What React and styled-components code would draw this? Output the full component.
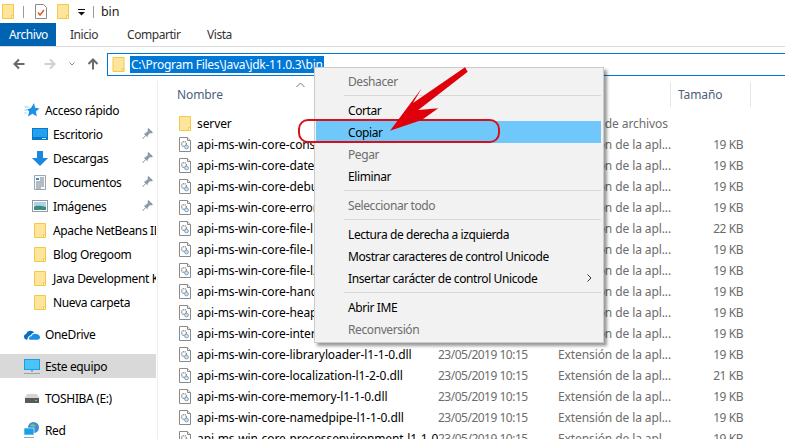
import React from "react";
import styled, { createGlobalStyle } from "styled-components";

const GlobalStyle = createGlobalStyle`
  html, body {
    margin: 0;
    padding: 0;
    background: #fff;
    overflow: hidden;
  }
`;

const Page = styled.div`
  position: relative;
  width: 785px;
  height: 439px;
  overflow: hidden;
  background: #fff;
  color: #000;
  font-family: "Noto Sans", "Open Sans", sans-serif;
  font-size: 12px;
  letter-spacing: -0.1px;
`;

const TitleBar = styled.div`
  height: 23px;
  display: flex;
  align-items: center;
  padding-left: 2px;
`;

const TitleSep = styled.span`
  width: 1px;
  height: 12px;
  background: #9a9a9a;
  margin: 0 ${(p) => p.$right}px 0 ${(p) => p.$left}px;
`;

const TitleText = styled.span`
  font-size: 12.5px;
  color: #222;
`;

const TitleGap = styled.span`
  width: 10px;
`;

const Tabs = styled.div`
  height: 23px;
  display: flex;
  border-bottom: 1px solid #dadada;
  letter-spacing: -0.45px;
`;

const Tab = styled.div`
  width: ${(p) => p.$w}px;
  display: flex;
  align-items: center;
  padding-left: ${(p) => p.$pad}px;
  box-sizing: border-box;
  background: ${(p) => (p.$active ? "#0063b1" : "transparent")};
  color: ${(p) => (p.$active ? "#fff" : "#333")};
`;

const NavBar = styled.div`
  height: 34px;
  display: flex;
  align-items: flex-start;
`;

const NavButtons = styled.div`
  width: 107px;
  height: 34px;
  display: flex;
  align-items: center;
  padding-left: 13px;
  box-sizing: border-box;
`;

const Address = styled.div`
  margin-top: 6px;
  flex: 1;
  height: 23px;
  box-sizing: border-box;
  border: 1px solid #0078d7;
  border-right: none;
  display: flex;
  align-items: center;
  padding-left: 4px;
  gap: 5px;
`;

const Selected = styled.span`
  background: #0078d7;
  color: #fff;
  line-height: 17px;
  padding: 0 1px;
  letter-spacing: -0.27px;
`;

const Body = styled.div`
  display: flex;
  height: 358px;
`;

const Sidebar = styled.div`
  width: 158px;
  box-sizing: border-box;
  border-right: 1px solid #eee;
  padding-top: 17px;
  flex: none;
  letter-spacing: -0.35px;
`;

const NavRow = styled.div`
  width: 156px;
  height: 24px;
  margin-bottom: ${(p) => p.$gap || 0}px;
  display: flex;
  align-items: center;
  box-sizing: border-box;
  position: relative;
  overflow: hidden;
  white-space: nowrap;
  background: ${(p) => (p.$selected ? "#d9d9d9" : "transparent")};
  padding-left: ${(p) => (p.$top ? 24 : 32)}px;
`;

const NavIcon = styled.span`
  width: 16px;
  margin-right: 5px;
  flex: none;
  display: flex;
  align-items: center;
  justify-content: center;
`;

const Pin = styled.span`
  position: absolute;
  right: 3px;
  top: 6px;
  display: flex;
`;

const Main = styled.div`
  flex: 1;
  min-width: 0;
`;

const HeaderRow = styled.div`
  height: 32px;
  box-sizing: border-box;
  padding-top: 1px;
  display: grid;
  grid-template-columns: 512px 81px;
  align-items: start;
  color: #4c607a;
  position: relative;
`;

const HeaderCell = styled.div`
  height: 25px;
  box-sizing: border-box;
  display: flex;
  align-items: center;
  padding-left: ${(p) => p.$pad}px;
  border-left: ${(p) => (p.$line ? "1px solid #e5e5e5" : "none")};
  border-right: ${(p) => (p.$line ? "1px solid #e5e5e5" : "none")};
`;

const SortMark = styled.svg`
  position: absolute;
  left: 138px;
  top: 1px;
`;

const FileList = styled.div`
  display: flex;
  flex-direction: column;
`;

const FileRow = styled.div`
  height: 21px;
  display: grid;
  grid-template-columns: 280px 120px 112px 73px;
  align-items: center;
  white-space: nowrap;
  color: #6d6d6d;
`;

const FileName = styled.div`
  display: flex;
  align-items: center;
  gap: 6px;
  padding-left: 21px;
  color: #000;
  overflow: hidden;
`;

const FileDate = styled.div`
  letter-spacing: -0.5px;
`;

const FileSize = styled.div`
  text-align: right;
  letter-spacing: -0.45px;
`;

const Menu = styled.div`
  position: absolute;
  left: 314px;
  top: 67px;
  width: 290px;
  height: 276px;
  box-sizing: border-box;
  padding: 2px 2px 2px 1px;
  background: #f2f2f2;
  border: 1px solid #ccc;
  box-shadow: 3px 3px 3px rgba(0, 0, 0, 0.4);
  letter-spacing: -0.4px;
`;

const MenuItem = styled.div`
  height: 22px;
  display: flex;
  align-items: center;
  justify-content: space-between;
  padding: 0 9px 0 32px;
  color: ${(p) => (p.$disabled ? "#6d6d6d" : "#000")};
  background: ${(p) => (p.$hot ? "#70c8fa" : "transparent")};
`;

const MenuSep = styled.div`
  height: 1px;
  margin: 3px 0 3px 28px;
  background: #d7d7d7;
`;

const Annotation = styled.svg`
  position: absolute;
  left: 0;
  top: 0;
  pointer-events: none;
`;

const Folder = ({ w = 12, h = 15 }) => (
  <svg width={w} height={h} viewBox="0 0 12 15" style={{ flex: "none" }}>
    <path d="M.5.5h11v14H.5z" fill="#fde59e" stroke="#f6c945" />
    <path d="M9.5 11.5h2v3h-2z" fill="#fff6d6" stroke="#f6c945" />
  </svg>
);

const DllIcon = () => (
  <svg width="12" height="15" viewBox="0 0 12 15" style={{ flex: "none" }}>
    <path d="M.5.5h8l3 3v11H.5z" fill="#fff" stroke="#8a8a8a" />
    <path d="M8.5.5v3h3" fill="#eee" stroke="#8a8a8a" />
    <circle cx="5" cy="7" r="2.4" fill="none" stroke="#8f8f8f" strokeWidth="1.4" strokeDasharray="1.2 .6" />
    <circle cx="7.5" cy="10" r="1.9" fill="#cfe3f2" stroke="#7aa6c8" />
  </svg>
);

const PinIcon = () => (
  <svg width="11" height="12" viewBox="0 0 11 12">
    <path d="M6.5 0 11 4.5 9.500 5.500 8 5 5.500 8 5.500 9.500 1.500 5.500 3 5.500 6 3 5.500 1.500Z" fill="#8d99a6" />
    <path d="M3.500 7.500 .5 11" stroke="#8d99a6" fill="none" />
  </svg>
);

const StarIcon = () => (
  <svg width="16" height="14" viewBox="0 0 15 14">
    <path d="M9.500 0 10.600 4.800 15 5.600 11.400 8.400 12.300 13.500 8 10.800 3.500 13.500 4.700 8.400 2.500 6.500 6.500 5Z" fill="#1e90e6" />
    <path d="M0 4h4M0 7h2.500M0 10h2" stroke="#8cc8f2" />
  </svg>
);

const DesktopIcon = () => (
  <svg width="16" height="12" viewBox="0 0 16 12">
    <rect width="16" height="12" fill="#0a78c8" />
    <rect x="1" y="1" width="14" height="8" fill="#22a2f0" />
    <path d="M10 10.500h4" stroke="#cfeaff" />
  </svg>
);

const DownloadIcon = () => (
  <svg width="16" height="15" viewBox="0 0 16 15">
    <path d="M5 0h6v7h5l-8 8-8-8h5Z" fill="#1b88e0" />
  </svg>
);

const DocsIcon = () => (
  <svg width="12" height="15" viewBox="0 0 12 15">
    <path d="M.5.5h11v14H.5z" fill="#fafafa" stroke="#9aa5ad" />
    <path d="M2 3h3v2H2z" fill="#2a8ad8" />
    <path d="M6 3h4M6 5h4M2 7h8M2 9h8M2 11h8M2 13h5" stroke="#6f7f8c" />
  </svg>
);

const PicturesIcon = () => (
  <svg width="16" height="12" viewBox="0 0 16 12">
    <rect x=".5" y=".5" width="15" height="11" fill="#fff" stroke="#8f9aa3" />
    <rect x="2" y="2" width="12" height="8" fill="#a9d3ee" />
    <path d="M2 7c3-2 7-1 12 0v3H2z" fill="#3f8a78" />
  </svg>
);

const CloudIcon = () => (
  <svg width="16" height="11" viewBox="0 0 17 11">
    <path d="M3 11a3 3 0 0 1-.8-5.900A5 5 0 0 1 11 3.400c-2 .2-3.200 1.400-3.600 3C5.500 6.500 4 8 3.500 11Z" fill="#0a6fc4" />
    <path d="M6 11c-1.500-1.500-.3-3.700 2-3.700.5-2 2.500-3.200 4.500-2.300 2.500-.2 4.500 1.500 4.500 3.500 0 1.500-1 2.500-2.500 2.500Z" fill="#1b8fe8" />
  </svg>
);

const MonitorIcon = () => (
  <svg width="16" height="15" viewBox="0 0 16 15">
    <rect width="16" height="11" fill="#16a0e8" />
    <rect x="1" y="1" width="14" height="9" fill="#4cc4f5" />
    <path d="M7 11h2v2H7z" fill="#8fa8b8" />
    <path d="M0 14.500h16" stroke="#8fa8b8" />
  </svg>
);

const DriveIcon = () => (
  <svg width="14" height="9" viewBox="0 0 14 9">
    <path d="M2 0h10l2 4H0Z" fill="#d5d5d5" />
    <rect y="4" width="14" height="5" fill="#5a5a5a" />
    <path d="M10 6.500h2" stroke="#4fd07a" />
  </svg>
);

const NetworkIcon = () => (
  <svg width="16" height="16" viewBox="0 0 16 16">
    <circle cx="9.500" cy="5.500" r="5.500" fill="#3d8fd0" />
    <path d="M6 3c2-1.500 5-1 6 1-2 1-5 1-6-1Z" fill="#7fc46f" />
    <rect y="6" width="10" height="7" fill="#16a0e8" stroke="#fff" strokeWidth=".6" />
    <path d="M0 15.500h10" stroke="#8fa8b8" />
  </svg>
);

const CheckDocIcon = () => (
  <svg width="12" height="15" viewBox="0 0 12 15" style={{ flex: "none" }}>
    <path d="M.5.5h8l3 3v11H.5z" fill="#fff" stroke="#8a8a8a" />
    <path d="M3 8.500 5 11l4-5" fill="none" stroke="#e4572e" strokeWidth="1.500" />
  </svg>
);

const DropMarkSvg = styled.svg`
  margin: 2px 8px 0 9px;
`;

const DropMark = () => (
  <DropMarkSvg width="7" height="7" viewBox="0 0 7 7">
    <path d="M0 .5h7" stroke="#111" />
    <path d="M0 3h7L3.500 6.500Z" fill="#111" />
  </DropMarkSvg>
);

const ArrowSvg = styled.svg`
  margin-right: ${(p) => p.$right}px;
  transform: rotate(${(p) => p.$dir}deg);
`;

const NavArrow = ({ dir, color, right }) => (
  <ArrowSvg width="12" height="12" viewBox="0 0 12 12" $right={right} $dir={dir}>
    <path d="M11.500 6H1.500M6 1.500 1.500 6 6 10.500" fill="none" stroke={color} strokeWidth="2" />
  </ArrowSvg>
);

const HistorySvg = styled.svg`
  margin-right: 12px;
`;

const HistoryMark = () => (
  <HistorySvg width="6" height="4" viewBox="0 0 6 4">
    <path d="M.5.500 3 3 5.500.500" fill="none" stroke="#8a8a8a" />
  </HistorySvg>
);

const quickLinks = [
  { label: "Escritorio", icon: <DesktopIcon />, pin: true },
  { label: "Descargas", icon: <DownloadIcon />, pin: true },
  { label: "Documentos", icon: <DocsIcon />, pin: true },
  { label: "Imágenes", icon: <PicturesIcon />, pin: true },
  { label: "Apache NetBeans IDE 11.0", icon: <Folder /> },
  { label: "Blog Oregoom", icon: <Folder /> },
  { label: "Java Development Kit", icon: <Folder /> },
  { label: "Nueva carpeta", icon: <Folder />, gap: 8 },
];

const files = [
  ["console-l1-1-0.dll", 19],
  ["datetime-l1-1-0.dll", 19],
  ["debug-l1-1-0.dll", 19],
  ["errorhandling-l1-1-0.dll", 19],
  ["file-l1-1-0.dll", 22],
  ["file-l1-2-0.dll", 19],
  ["file-l2-1-0.dll", 19],
  ["handle-l1-1-0.dll", 19],
  ["heap-l1-1-0.dll", 19],
  ["interlocked-l1-1-0.dll", 19],
  ["libraryloader-l1-1-0.dll", 19],
  ["localization-l1-2-0.dll", 21],
  ["memory-l1-1-0.dll", 19],
  ["namedpipe-l1-1-0.dll", 19],
  ["processenvironment-l1-1-0.dll", 19],
];

const menuItems = [
  { label: "Deshacer", disabled: true },
  { sep: true },
  { label: "Cortar" },
  { label: "Copiar", hot: true },
  { label: "Pegar", disabled: true },
  { label: "Eliminar" },
  { sep: true },
  { label: "Seleccionar todo", disabled: true },
  { sep: true },
  { label: "Lectura de derecha a izquierda" },
  { label: "Mostrar caracteres de control Unicode" },
  { label: "Insertar carácter de control Unicode", sub: true },
  { sep: true },
  { label: "Abrir IME" },
  { label: "Reconversión", disabled: true },
];

export default function App() {
  return (
    <Page>
      <GlobalStyle />
      <TitleBar>
        <Folder />
        <TitleSep $left={9} $right={11} />
        <CheckDocIcon />
        <TitleGap />
        <Folder />
        <DropMark />
        <TitleSep $left={0} $right={7} />
        <TitleText>bin</TitleText>
      </TitleBar>
      <Tabs>
        <Tab $active $w={56} $pad={9}>Archivo</Tab>
        <Tab $w={57} $pad={14}>Inicio</Tab>
        <Tab $w={80} $pad={14}>Compartir</Tab>
        <Tab $w={60} $pad={14}>Vista</Tab>
      </Tabs>
      <NavBar>
        <NavButtons>
          <NavArrow dir={0} color="#6a6a6a" right={19} />
          <NavArrow dir={180} color="#d0d0d0" right={13} />
          <HistoryMark />
          <NavArrow dir={90} color="#6a6a6a" right={0} />
        </NavButtons>
        <Address>
          <Folder w={13} h={15} />
          <Selected>C:\Program Files\Java\jdk-11.0.3\bin</Selected>
        </Address>
      </NavBar>
      <Body>
        <Sidebar>
          <NavRow $top>
            <NavIcon><StarIcon /></NavIcon>
            Acceso rápido
          </NavRow>
          {quickLinks.map((link) => (
            <NavRow key={link.label} $gap={link.gap}>
              <NavIcon>{link.icon}</NavIcon>
              {link.label}
              {link.pin && <Pin><PinIcon /></Pin>}
            </NavRow>
          ))}
          <NavRow $top $gap={8}>
            <NavIcon><CloudIcon /></NavIcon>
            OneDrive
          </NavRow>
          <NavRow $top $selected $gap={8}>
            <NavIcon><MonitorIcon /></NavIcon>
            Este equipo
          </NavRow>
          <NavRow $top $gap={8}>
            <NavIcon><DriveIcon /></NavIcon>
            TOSHIBA (E:)
          </NavRow>
          <NavRow $top>
            <NavIcon><NetworkIcon /></NavIcon>
            Red
          </NavRow>
        </Sidebar>
        <Main>
          <HeaderRow>
            <HeaderCell $pad={19}>Nombre</HeaderCell>
            <HeaderCell $pad={7} $line>Tamaño</HeaderCell>
            <SortMark width="9" height="6" viewBox="0 0 9 6">
              <path d="M.5 5 4.500 1 8.500 5" fill="none" stroke="#777" />
            </SortMark>
          </HeaderRow>
          <FileList>
            <FileRow>
              <FileName><Folder />server</FileName>
              <FileDate>23/05/2019 10:15</FileDate>
              <div>Carpeta de archivos</div>
              <div />
            </FileRow>
            {files.map(([name, size]) => (
              <FileRow key={name}>
                <FileName><DllIcon />{`api-ms-win-core-${name}`}</FileName>
                <FileDate>23/05/2019 10:15</FileDate>
                <div>Extensión de la apl...</div>
                <FileSize>{size} KB</FileSize>
              </FileRow>
            ))}
          </FileList>
        </Main>
      </Body>
      <Menu>
        {menuItems.map((item, i) =>
          item.sep ? (
            <MenuSep key={i} />
          ) : (
            <MenuItem key={i} $disabled={item.disabled} $hot={item.hot}>
              {item.label}
              {item.sub && (
                <svg width="5" height="8" viewBox="0 0 5 8">
                  <path d="M.5.500 4 4 .5 7.500" fill="none" stroke="#333" />
                </svg>
              )}
            </MenuItem>
          )
        )}
      </Menu>
      <Annotation width="785" height="439" viewBox="0 0 785 439">
        <rect x="299" y="120" width="200" height="22" rx="9" fill="none" stroke="#d9101c" strokeWidth="2" />
        <path d="M390 130.700 421.700 88.300 413 103 465 67.300 467.700 71.700 418.300 110 438.300 108.300 421.700 120Z" fill="#e0000b" />
      </Annotation>
    </Page>
  );
}
